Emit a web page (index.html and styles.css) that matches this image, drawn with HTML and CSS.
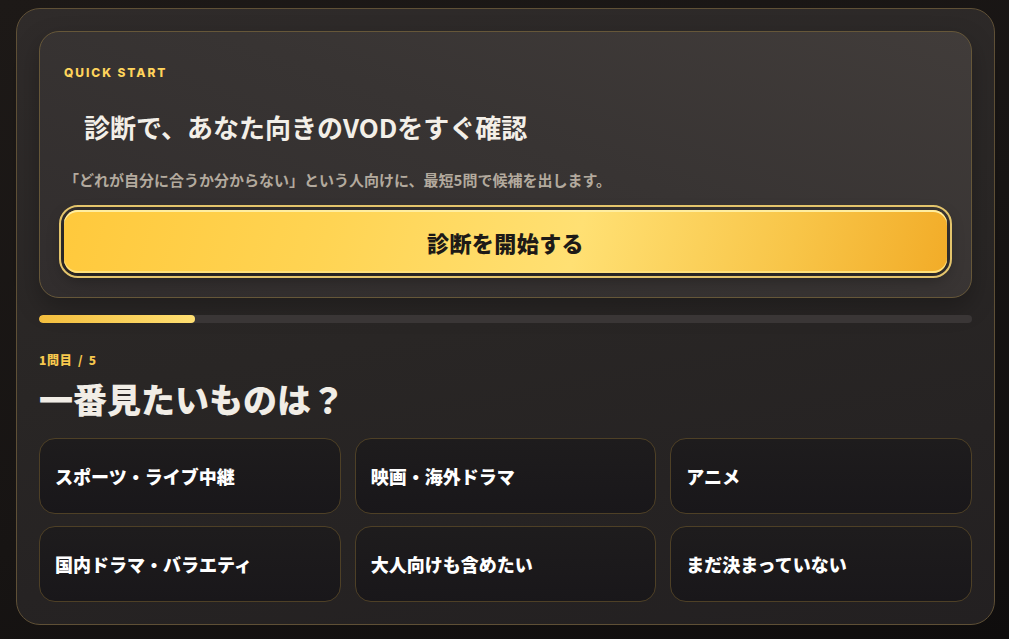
FILE: index.html
```html
<!DOCTYPE html>
<html lang="ja">
<head>
<meta charset="utf-8">
<title>VOD診断</title>
<link rel="stylesheet" href="styles.css">
</head>
<body>
<main class="panel">
  <section class="intro">
    <p class="eyebrow">QUICK START</p>
    <h1 class="intro-title">診断で、あなた向きのVODをすぐ確認</h1>
    <p class="intro-lead">「どれが自分に合うか分からない」という人向けに、最短5問で候補を出します。</p>
    <button class="start-btn" type="button">診断を開始する</button>
  </section>

  <div class="progress"><div class="progress-fill" style="width:16.7%"></div></div>

  <section class="quiz">
    <p class="quiz-step">1問目 / 5</p>
    <h2 class="quiz-question">一番見たいものは？</h2>
    <div class="options">
      <button class="option" type="button">スポーツ・ライブ中継</button>
      <button class="option" type="button">映画・海外ドラマ</button>
      <button class="option" type="button">アニメ</button>
      <button class="option" type="button">国内ドラマ・バラエティ</button>
      <button class="option" type="button">大人向けも含めたい</button>
      <button class="option" type="button">まだ決まっていない</button>
    </div>
  </section>
</main>
</body>
</html>
```

FILE: styles.css
```css
* { box-sizing: border-box; }

html, body { height: 100%; }

body {
  margin: 0;
  padding: 8px 14px 14px 16px;
  background: linear-gradient(160deg, #1d1917 0%, #171413 55%, #0f0d0d 100%);
  font-family: "Noto Sans CJK JP", "Noto Sans", sans-serif;
  color: #f3efe8;
}

.panel {
  border: 1px solid #5f5036;
  border-radius: 24px;
  padding: 22px;
  background: linear-gradient(170deg, #2f2b2a 0%, #292625 50%, #232021 100%);
}

/* intro card */
.intro {
  border: 1px solid #665739;
  border-radius: 20px;
  padding: 33px 24px 24px;
  background: linear-gradient(200deg, #413c3a 0%, #383433 45%, #312d2d 100%);
  box-shadow: 0 10px 24px rgba(0, 0, 0, 0.25);
}

.eyebrow {
  margin: 0;
  font-family: "Inter", "Liberation Sans", sans-serif;
  font-weight: 800;
  font-size: 12px;
  line-height: 16px;
  letter-spacing: 0.16em;
  color: #ffd45c;
}

.intro-title {
  margin: 29px 0 0 20px;
  font-size: 26px;
  line-height: 34px;
  font-weight: 700;
  color: #f3efe8;
}

.intro-lead {
  margin: 26px 0 0;
  font-size: 15px;
  line-height: 20px;
  font-weight: 700;
  color: #b3aa9e;
}

.start-btn {
  display: block;
  width: 100%;
  height: 63px;
  margin-top: 20px;
  border: 0;
  border-radius: 14px;
  background: linear-gradient(105deg, #ffc93c 0%, #ffd453 30%, #ffe073 58%, #f8c548 82%, #f2ac28 100%);
  box-shadow: inset 0 2px 0 #ffeea0, inset 0 -2px 0 #ffe07a, 0 6px 16px rgba(0, 0, 0, 0.35);
  outline: 2px solid #e3c46c;
  outline-offset: 3px;
  font-family: inherit;
  font-size: 22px;
  font-weight: 900;
  color: #1d1a17;
  letter-spacing: 0.02em;
}

/* progress */
.progress {
  margin-top: 17px;
  height: 8px;
  border-radius: 4px;
  background: #3a3636;
  overflow: hidden;
}

.progress-fill {
  height: 100%;
  border-radius: 4px;
  background: linear-gradient(90deg, #f3be3e, #ffdf72);
}

/* quiz */
.quiz { margin-top: 29px; }

.quiz-step {
  margin: 0;
  font-size: 12px;
  line-height: 16px;
  font-weight: 900;
  letter-spacing: 0.06em;
  word-spacing: 2px;
  color: #f7c84e;
}

.quiz-question {
  margin: 9px 0 0;
  font-size: 34px;
  line-height: 44px;
  font-weight: 900;
  color: #f1ede6;
}

.options {
  margin-top: 17px;
  display: grid;
  grid-template-columns: repeat(3, 1fr);
  grid-auto-rows: 76px;
  gap: 12px 14px;
}

.option {
  padding: 0 0 0 15px;
  border: 1px solid #4e4026;
  border-radius: 16px;
  background: linear-gradient(180deg, #1e1c1d 0%, #19171a 100%);
  text-align: left;
  font-family: inherit;
  font-size: 18px;
  font-weight: 900;
  color: #ffffff;
}
```
